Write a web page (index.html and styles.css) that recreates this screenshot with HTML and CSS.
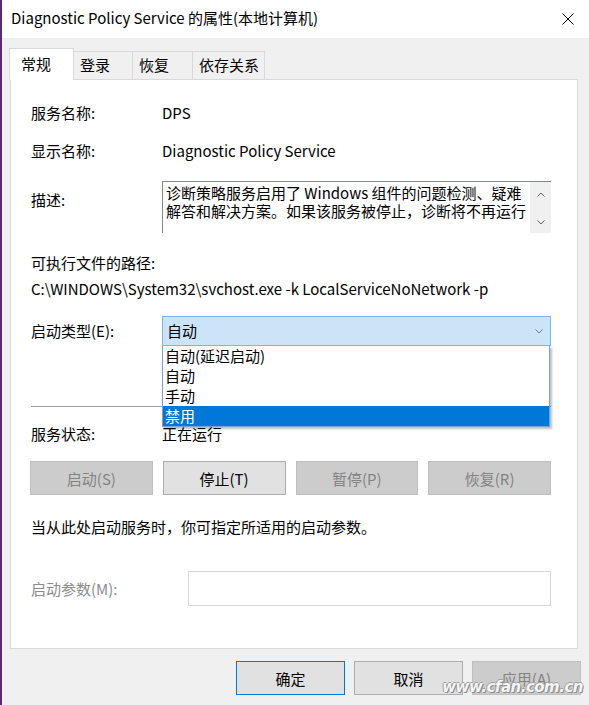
FILE: index.html
```html
<!DOCTYPE html>
<html lang="zh-CN">
<head>
    <meta charset="UTF-8">
    <title>Diagnostic Policy Service 的属性(本地计算机)</title>
    <link rel="stylesheet" href="styles.css">
</head>
<body>
    <div class="window">
        <div class="titlebar">
            <span class="title">Diagnostic Policy Service 的属性(本地计算机)</span>
            <svg class="close" width="12" height="12" viewBox="0 0 12 12">
                <path d="M0.5 0.5 L11.5 11.5 M11.5 0.5 L0.5 11.5" stroke="#000" stroke-width="1" fill="none"/>
            </svg>
        </div>

        <div class="dialog">
            <!-- Register -->
            <div class="tabs">
                <div class="tab active">常规</div>
                <div class="tab">登录</div>
                <div class="tab">恢复</div>
                <div class="tab">依存关系</div>
            </div>

            <div class="panel">
                <div class="row first">
                    <span class="label">服务名称:</span>
                    <span class="value">DPS</span>
                </div>
                <div class="row">
                    <span class="label">显示名称:</span>
                    <span class="value">Diagnostic Policy Service</span>
                </div>
                <div class="row desc-row">
                    <span class="label desc-label">描述:</span>
                    <div class="textarea">
                        <div class="textarea-text">诊断策略服务启用了 Windows 组件的问题检测、疑难解答和解决方案。如果该服务被停止，诊断将不再运行</div>
                        <div class="scrollbar">
                            <svg width="8" height="5" viewBox="0 0 8 5"><path d="M0.5 4.5 L4 1 L7.5 4.5" stroke="#606060" fill="none"/></svg>
                            <svg width="8" height="5" viewBox="0 0 8 5"><path d="M0.5 0.5 L4 4 L7.5 0.5" stroke="#606060" fill="none"/></svg>
                        </div>
                    </div>
                </div>

                <div class="path-label">可执行文件的路径:</div>
                <div class="path">C:\WINDOWS\System32\svchost.exe -k LocalServiceNoNetwork -p</div>

                <div class="row type-row">
                    <span class="label">启动类型(E):</span>
                    <div class="combo">
                        <div class="combo-box">
                            <span>自动</span>
                            <svg width="8" height="5" viewBox="0 0 8 5"><path d="M0.5 0.5 L4 4 L7.5 0.5" stroke="#7a7a7a" fill="none"/></svg>
                        </div>
                        <ul class="combo-list">
                            <li>自动(延迟启动)</li>
                            <li>自动</li>
                            <li>手动</li>
                            <li class="selected">禁用</li>
                        </ul>
                    </div>
                </div>

                <div class="separator"></div>

                <div class="row status-row">
                    <span class="label">服务状态:</span>
                    <span class="value">正在运行</span>
                </div>

                <div class="service-buttons">
                    <button class="btn disabled">启动(S)</button>
                    <button class="btn">停止(T)</button>
                    <button class="btn disabled">暂停(P)</button>
                    <button class="btn disabled">恢复(R)</button>
                </div>

                <div class="note">当从此处启动服务时，你可指定所适用的启动参数。</div>

                <div class="row param-row">
                    <span class="label grey">启动参数(M):</span>
                    <div class="param-input"></div>
                </div>
            </div>

            <div class="footer">
                <button class="btn wide focused">确定</button>
                <button class="btn wide">取消</button>
                <button class="btn wide disabled">应用(A)</button>
            </div>
        </div>

        <div class="watermark">www.cfan.com.cn</div>
    </div>
</body>
</html>
```

FILE: styles.css
```css
html, body {
    margin: 0;
    padding: 0;
    background: #f0f0f0;
}
body {
    font-family: "Noto Sans CJK SC", "Noto Sans", sans-serif;
    font-size: 15px;
    color: #000;
}
.window {
    position: relative;
    height: 705px;
    border-left: 2px solid #5d2a6d;
    background: #f0f0f0;
    overflow: hidden;
}
.titlebar {
    height: 38px;
    background: #fff;
    display: flex;
    align-items: center;
    justify-content: space-between;
    padding: 0 15px 0 9px;
}
.title {
    font-size: 15px;
    line-height: 20px;
    margin-top: -2px;
}
.close {
    margin-top: -1px;
}
.dialog {
    padding: 10px 8px 0 8px;
}
.tabs {
    display: flex;
    align-items: flex-end;
    margin-left: -1px;
    margin-bottom: -1px;
}
.tab {
    box-sizing: border-box;
    height: 28px;
    line-height: 26px;
    min-width: 59px;
    padding: 0 6px;
    white-space: nowrap;
    border: 1px solid #d9d9d9;
    border-left: none;
    border-bottom: none;
    background: #f0f0f0;
    margin-bottom: 1px;
}
.tab.active {
    position: relative;
    z-index: 1;
    height: 32px;
    line-height: 30px;
    width: 65px;
    padding-left: 11px;
    border-left: 1px solid #d9d9d9;
    background: #fff;
    margin-bottom: 0;
}
.tab:nth-child(2) {
    width: 59px;
}
.tab:nth-child(3) {
    width: 60px;
}
.tab:nth-child(4) {
    width: 72px;
    padding-right: 0;
}
.panel {
    background: #fff;
    border: 1px solid #d9d9d9;
    width: 568px;
    box-sizing: border-box;
    height: 570px;
    padding: 23px 26px 0 20px;
}
.row {
    display: flex;
    align-items: center;
    line-height: 20px;
}
.row + .row {
    margin-top: 18px;
}
.label {
    width: 131px;
    flex-shrink: 0;
}
.label.grey {
    color: #8c8c8c;
    width: 157px;
}
.desc-row {
    align-items: flex-start;
    margin-top: 20px !important;
}
.desc-label {
    padding-top: 9px;
}
.textarea {
    flex: 1;
    height: 52px;
    border-top: 1px solid #828790;
    border-left: 1px solid #828790;
    display: flex;
    box-sizing: border-box;
}
.textarea-text {
    flex: 1;
    padding: 2px 0 0 3px;
    line-height: 18px;
}
.scrollbar {
    width: 21px;
    background: #f0f0f0;
    display: flex;
    flex-direction: column;
    align-items: center;
    justify-content: space-between;
    padding: 10px 0 8px;
    box-sizing: border-box;
}
.path-label {
    margin-top: 20px;
    line-height: 20px;
}
.path {
    margin-top: 6px;
    line-height: 20px;
}
.type-row {
    margin-top: 17px !important;
}
.combo {
    flex: 1;
    position: relative;
}
.combo-box {
    height: 30px;
    box-sizing: border-box;
    background: #cce4f7;
    border: 1px solid #7eb4ea;
    display: flex;
    align-items: center;
    justify-content: space-between;
    padding: 0 7px 0 4px;
}
.combo-list {
    position: absolute;
    top: 30px;
    left: 0;
    right: 1px;
    margin: 0;
    padding: 0;
    list-style: none;
    background: #fff;
    border: 1px solid #7a9ed8;
    border-top: none;
    box-shadow: 2px 2px 2px rgba(0, 0, 0, 0.25);
    z-index: 2;
}
.combo-list li {
    height: 20px;
    line-height: 20px;
    padding-left: 2px;
}
.combo-list li.selected {
    background: #0078d7;
    color: #fff;
}
.separator {
    height: 1px;
    background: #a0a0a0;
    margin-top: 60px;
}
.status-row {
    margin-top: 17px !important;
}
.service-buttons {
    margin-top: 17px;
    display: grid;
    grid-template-columns: repeat(4, 1fr);
    gap: 10px;
    margin-left: -1px;
}
.btn {
    font-family: inherit;
    font-size: 15px;
    height: 34px;
    background: #e1e1e1;
    border: 1px solid #adadad;
    color: #000;
    padding: 0;
}
.btn.disabled {
    background: #cccccc;
    border-color: #bfbfbf;
    color: #838383;
}
.note {
    margin-top: 22px;
    line-height: 20px;
}
.param-row {
    margin-top: 34px !important;
}
.param-input {
    flex: 1;
    height: 35px;
    box-sizing: border-box;
    border: 1px solid #d6d6d6;
}
.footer {
    display: flex;
    justify-content: flex-end;
    gap: 9px;
    margin-top: 12px;
}
.btn.wide {
    width: 109px;
}
.btn.focused {
    border: 1px solid #0078d7;
}
.watermark {
    position: absolute;
    right: 6px;
    bottom: 9px;
    font-family: "DejaVu Sans", sans-serif;
    font-weight: bold;
    font-style: italic;
    font-size: 15px;
    letter-spacing: -0.5px;
    color: #f4f4f4;
    text-shadow: 1px 1px 0 #8a8a8a, -1px 0 0 #a0a0a0, 0 -1px 0 #a0a0a0;
}
```
